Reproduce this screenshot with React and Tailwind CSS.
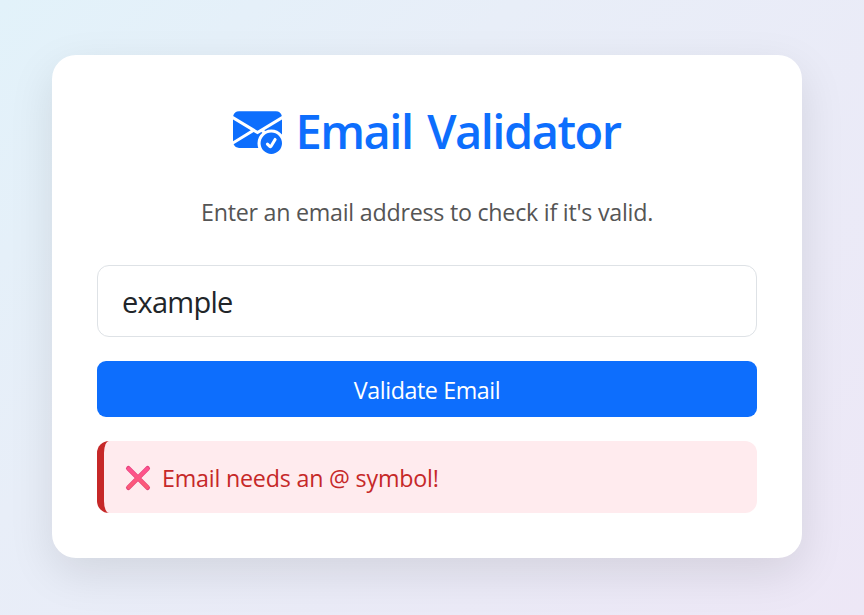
import { BsEnvelopeCheckFill } from "react-icons/bs";

function CrossMark() {
  return (
    <svg viewBox="0 0 26 26" className="mt-[2px] h-[26px] w-[26px] shrink-0" aria-hidden="true">
      <defs>
        <linearGradient id="cross" x1="0" y1="0" x2="0" y2="1">
          <stop offset="0" stopColor="#ff5290" />
          <stop offset="1" stopColor="#fb5a74" />
        </linearGradient>
      </defs>
      <path d="M3.4 3.4 22.6 22.6M22.6 3.4 3.4 22.6" stroke="#e5407a" strokeWidth="4.8" strokeLinecap="round" />
      <path d="M3.7 3.7 22.3 22.3M22.3 3.7 3.7 22.3" stroke="url(#cross)" strokeWidth="3.4" strokeLinecap="round" />
    </svg>
  );
}

export default function App() {
  return (
    <div className="flex h-[615px] w-[864px] items-start overflow-hidden bg-[linear-gradient(135deg,#e2f2fa,#e8eef8_35%,#ede7f6)] pt-[55px] pl-[52px] font-['Open_Sans','Noto_Sans',sans-serif]">
      <main className="flex h-[503px] w-[750px] flex-col rounded-[24px] bg-white px-[45px] pt-[48px] shadow-[0_15px_45px_rgba(0,0,0,0.1)]">
        <h1 className="flex h-[58px] items-center justify-center gap-[13px] text-[47px] leading-[58px] font-semibold whitespace-nowrap text-[#0d6efd]">
          <BsEnvelopeCheckFill className="mt-[-6px] h-[49px] w-[49px] shrink-0" />
          <span className="mt-[-3px] tracking-[-1.5px] [word-spacing:4px]">Email Validator</span>
        </h1>
        <p className="mt-[33px] text-center text-[23.25px] leading-[36px] tracking-[-0.25px] whitespace-nowrap text-[#555]">
          Enter an email address to check if it's valid.
        </p>
        <input
          defaultValue="example"
          className="mt-[35px] h-[72px] w-full shrink-0 rounded-[12px] border border-[#dee2e6] bg-white px-[24px] pt-[1px] text-[29px] leading-[45px] tracking-[-0.75px] text-[#212529] outline-none"
        />
        <button className="mt-[24px] h-[56px] w-full shrink-0 rounded-[9px] bg-[#0d6efd] pt-[2px] text-[23.25px] leading-[36px] tracking-[-0.4px] whitespace-nowrap text-white">
          Validate Email
        </button>
        <div className="mt-[24px] flex h-[72px] shrink-0 items-center gap-[11px] rounded-[12px] border-l-[7px] border-[#c62828] bg-[#ffebee] pl-[21px] text-[23.25px] leading-[36px] tracking-[-0.2px] whitespace-nowrap text-[#c62828]">
          <CrossMark />
          <span className="mt-[2px]">Email needs an @ symbol!</span>
        </div>
      </main>
    </div>
  );
}
